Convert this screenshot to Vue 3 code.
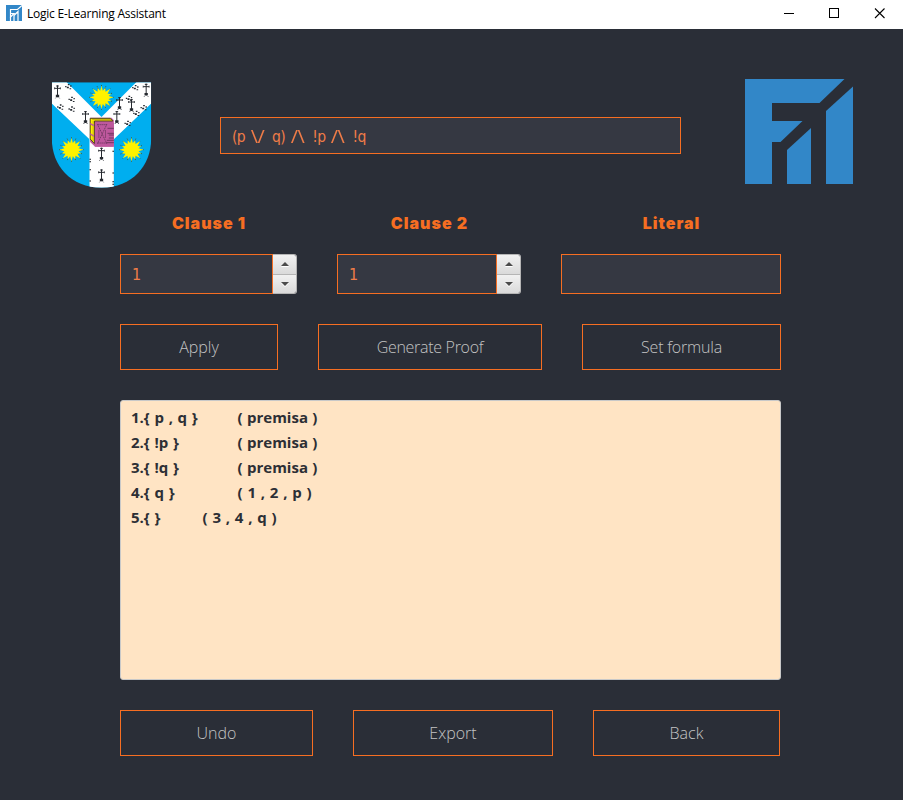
<script setup>
const formula = ['(p', '\\/', 'q)', '/\\', '!p', '/\\', '!q']
const isOperator = (token) => token.includes('\\')
const steps = [
  { clause: '1.{ p , q }', reason: '( premisa )' },
  { clause: '2.{ !p }', reason: '( premisa )' },
  { clause: '3.{ !q }', reason: '( premisa )' },
  { clause: '4.{ q }', reason: '( 1 , 2 , p )', spaced: true },
  { clause: '5.{ }', reason: '( 3 , 4 , q )', short: true, spaced: true },
]
const ermine = [
  [40, 55], [124, 132], [226, 90], [262, 96], [306, 50], [218, 132], [172, 242], [172, 307],
]
const tufts = [
  [72, 38], [82, 76], [48, 99], [82, 105], [273, 41], [254, 73], [298, 101], [276, 118], [250, 148],
]
const specks = [
  [138, 257], [138, 264], [207, 233], [138, 322], [207, 298], [207, 324], [207, 332], [138, 288],
]
const stars = [[172, 71], [82, 228], [262, 228]]
</script>

<template>
  <div class="window">
    <header class="titlebar">
      <svg class="app-icon" viewBox="0 0 16 16">
        <rect width="16" height="16" fill="#3287c8" />
        <path d="M4.5 16V4.5H11.500L16 .5M4.5 8.5H8L4 12.500M8 16V10.500L12 6.500V16" fill="none" stroke="#fff" stroke-width="1.2" />
      </svg>
      <span class="title">Logic E-Learning Assistant</span>
      <svg class="controls" viewBox="0 0 112 14">
        <g fill="none" stroke="#000" stroke-width="1">
          <path d="M1 7.5H11" />
          <rect x="46.500" y="2.500" width="9" height="9" />
          <path d="M92 2.500L101.500 12M101.500 2.500L92 12" stroke-width="1.1" />
        </g>
      </svg>
    </header>

    <main class="content">
      <section class="top">
        <svg class="crest" viewBox="22 25 300 318">
          <defs>
            <clipPath id="shield"><path d="M23 26H321V195C321 275 264 342 172 342S23 275 23 195Z" /></clipPath>
            <g id="ermine" fill="none" stroke="#262a30" stroke-width="3">
              <path d="M0-20V16M-9-11H9M-4-18H4" />
              <path d="M-9-14V-8M9-14V-8" stroke-width="2" />
              <path d="M0 12L-7 20M0 12L7 20" stroke-dasharray="3 3" />
              <path d="M-5 8H5V15H-5Z" fill="#262a30" stroke="none" />
            </g>
            <g id="tuft" fill="#262a30">
              <path d="M-1-7H4V-3H-1ZM-4 1H2V6H-4ZM-9-1H-5V3H-9ZM6-3H10V1H6ZM4 6H9V9H4Z" />
            </g>
            <g id="star">
              <path d="M0-37V37M-37 0H37M-26-26L26 26M26-26L-26 26M-13-33L13 33M13-33L-13 33M-33-13L33 13M-33 13L33-13" stroke="#4b5a35" stroke-width="3" stroke-dasharray="3 3" />
              <path d="M0-35L4-20 11-28 12-17 26-26 18-11 29-10 21-4 36 0 21 5 29 11 18 12 26 26 12 18 11 29 4 20 0 35-4 20-11 29-12 18-26 26-18 12-29 11-21 5-36 0-21-4-29-10-18-11-26-26-12-17-11-28-4-20Z" fill="#fff200" />
            </g>
          </defs>
          <g clip-path="url(#shield)">
            <rect x="22" y="25" width="302" height="320" fill="#00aeef" />
            <path d="M22 25H67L172 130L277 25H322V89L209 197V343H136V197L22 89Z" fill="#fff" />
            <use v-for="([x, y], i) in ermine" :key="'e' + i" href="#ermine" :x="x" :y="y" />
            <use v-for="([x, y], i) in tufts" :key="'t' + i" href="#tuft" :x="x" :y="y" />
            <rect v-for="([x, y], i) in specks" :key="'s' + i" :x="x - 2" :y="y - 2" width="4" height="4" fill="#262a30" />
            <use v-for="([x, y], i) in stars" :key="'y' + i" href="#star" :x="x" :y="y" />
          </g>
          <path d="M138 132H202L209 140V219H153L138 205Z" fill="#be589d" />
          <path d="M138 134H198L206 142H151V210L138 196Z" fill="#fff200" stroke="#54471f" stroke-width="3" />
          <path d="M144 138H200M147 142V203" stroke="#a18a17" stroke-width="2" fill="none" />
          <path d="M152 148H209V219H152Z" fill="#be589d" />
          <path d="M138 150L149 156M138 180L149 188" stroke="#be589d" stroke-width="4" />
          <path d="M160 152L188 210M188 152L160 210M160 153H188M160 208H188M164 170V194M184 170V194" fill="none" stroke="#4d2945" stroke-width="2" stroke-dasharray="4 2" />
          <path d="M209 164H190M190 179H209M209 184H194M194 193H209M209 200H188M188 207H209" fill="none" stroke="#4d2945" stroke-width="2" />
        </svg>
        <div class="field formula">
          <span v-for="(token, i) in formula" :key="i" :class="{ operator: isOperator(token) }">{{ token }}</span>
        </div>
        <svg class="logo" viewBox="0 0 108 105" fill="#3287c8">
          <path d="M0 0H99.500L74.500 24H27V42H57.500L35.500 63H27V105H0Z" />
          <path d="M42 71L66 49V105H42Z" />
          <path d="M81 32L108 7.500V105H81Z" />
        </svg>
      </section>

      <section class="row inputs">
        <div class="column first">
          <label>Clause 1</label>
          <div class="spinner">
            <div class="field">1</div>
            <div class="arrows"><button class="up"><i /></button><button class="down"><i /></button></div>
          </div>
        </div>
        <div class="column second">
          <label>Clause 2</label>
          <div class="spinner">
            <div class="field">1</div>
            <div class="arrows"><button class="up"><i /></button><button class="down"><i /></button></div>
          </div>
        </div>
        <div class="column third">
          <label>Literal</label>
          <div class="field"></div>
        </div>
      </section>

      <section class="row actions">
        <button class="btn apply">Apply</button>
        <button class="btn generate">Generate Proof</button>
        <button class="btn set">Set formula</button>
      </section>

      <section class="proof">
        <div v-for="step in steps" :key="step.clause" class="step">
          <span class="clause" :class="{ short: step.short }">{{ step.clause }}</span>
          <span class="reason" :class="{ spaced: step.spaced }">{{ step.reason }}</span>
        </div>
      </section>

      <section class="row footer">
        <button class="btn undo">Undo</button>
        <button class="btn export">Export</button>
        <button class="btn back">Back</button>
      </section>
    </main>
  </div>
</template>

<style>
body { margin: 0; background: #2a2e37; }
</style>

<style scoped>
* { box-sizing: border-box; }
.window { width: 903px; height: 800px; background: #2a2e37; overflow: hidden; font-family: "Open Sans", sans-serif; }
.titlebar { height: 29px; background: #fff; display: flex; align-items: center; padding: 0 8px 3px 6px; }
.app-icon { width: 16px; height: 16px; }
.title { margin-left: 5px; font-size: 12px; color: #000; letter-spacing: -0.23px; white-space: nowrap; }
.controls { width: 112px; height: 14px; margin-left: auto; }
.content { padding: 50px 50px 0 51px; }
.top { display: flex; align-items: flex-start; height: 109px; }
.crest { width: 101px; height: 106px; margin-top: 3px; }
.formula { width: 461px; height: 37px; margin: 38px 64px 0 68px; }
.logo { width: 108px; height: 105px; }
.field { display: flex; align-items: center; border: 1px solid #f66e22; background: #353842; color: #f07c48; font-family: "DejaVu Sans Condensed", "DejaVu Sans", sans-serif; font-stretch: condensed; font-size: 16px; padding: 0 11px; }
.field.formula { font-size: 15.5px; gap: 6px; letter-spacing: -0.6px; padding-top: 3px; }
.operator { width: 15px; letter-spacing: 0; transform: scaleX(1.45); transform-origin: left; }
.row { display: flex; gap: 40px; width: 661px; margin-left: 69px; }
.inputs { margin-top: 22px; }
.column label { display: block; height: 44px; padding-left: 1px; line-height: 27px; text-align: center; color: #f66e22; font-family: Inter, sans-serif; font-size: 16px; font-weight: 900; letter-spacing: 1px; }
.first { width: 177px; }
.second { width: 184px; }
.third { width: 220px; }
.column .field { height: 40px; flex: 1; }
.spinner { display: flex; height: 40px; }
.arrows { width: 24px; display: flex; flex-direction: column; border: 1px solid #b5b5b5; border-left: 0; border-radius: 0 3px 3px 0; overflow: hidden; }
.arrows button { flex: 1; border: 0; padding: 0; display: flex; align-items: center; justify-content: center; background: linear-gradient(#f1f1f1, #dadada); }
.arrows .up { border-bottom: 1px solid #b5b5b5; }
.arrows i { border: 4px solid transparent; border-top-width: 0; border-bottom: 4px solid #4b4b4b; filter: drop-shadow(0 1px 0 #fff); }
.arrows .down i { border-bottom-width: 0; border-top: 4px solid #4b4b4b; }
.btn { height: 46px; padding: 0; border: 1px solid #f66e22; background: transparent; color: #c4c4c4; font-family: "Open Sans", sans-serif; font-size: 16px; font-weight: 350; }
.actions { margin-top: 30px; }
.apply { width: 158px; }
.generate { width: 224px; letter-spacing: -0.3px; }
.set { width: 199px; letter-spacing: -0.2px; }
.proof { width: 661px; height: 280px; margin: 30px 0 0 69px; padding: 4px 10px; background: #ffe4c4; border: 1px solid #c8c8c8; border-radius: 3px; color: #2d2f35; font-size: 15px; font-weight: 700; }
.step { display: flex; height: 25px; line-height: 25px; white-space: pre; }
.clause { width: 106.5px; word-spacing: 0.8px; }
.clause.short { width: 71.5px; }
.reason { word-spacing: 0.5px; }
.reason.spaced { word-spacing: 0.9px; }
.footer { margin-top: 30px; }
.undo { width: 193px; }
.export { width: 200px; }
.back { width: 187px; }
</style>
